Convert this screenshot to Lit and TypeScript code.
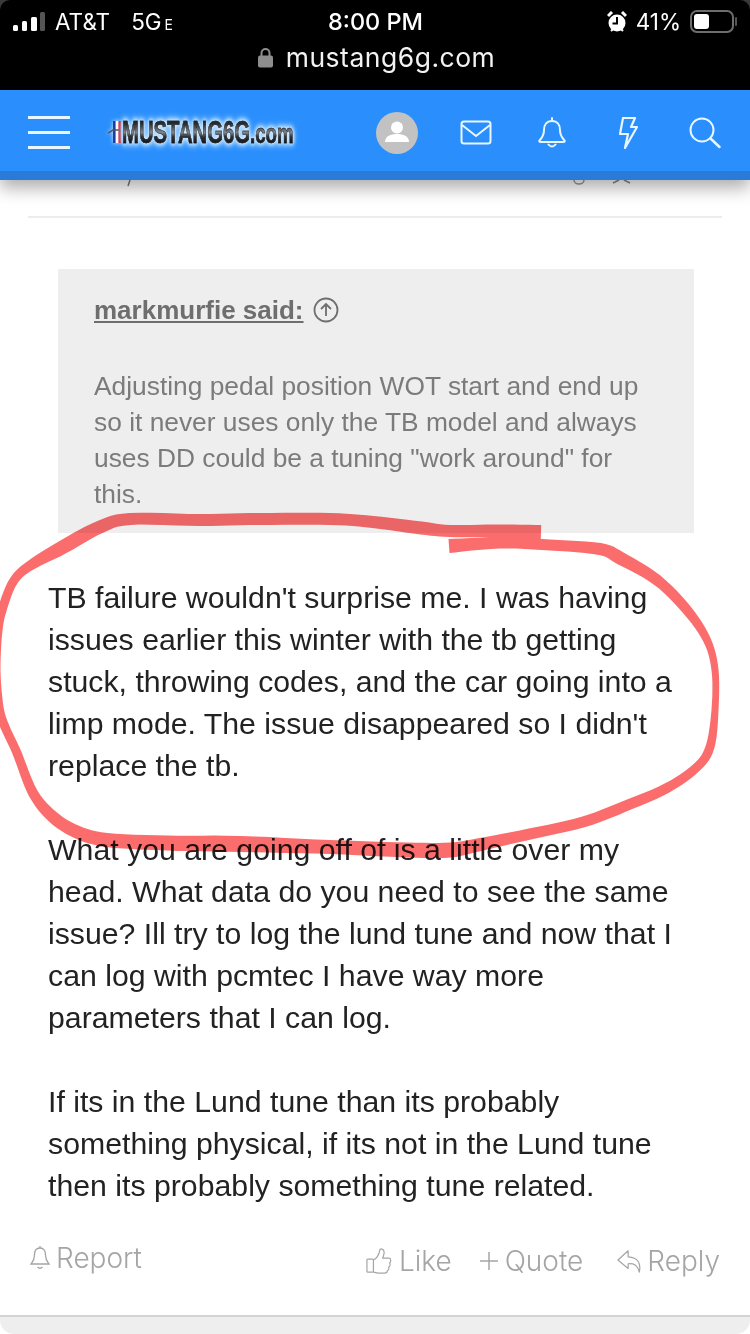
import { LitElement, css, html, svg } from "lit";
import { customElement } from "lit/decorators.js";

// x, y, width along the marker stroke drawn over the screenshot
const strokePoints = [
  [541, 532, 14], [495, 531, 13], [450, 531, 12], [421, 528, 13], [373, 522, 12], [330, 519, 12],
  [260, 519, 12], [200, 520, 12], [130, 519, 12], [100, 527, 13], [63, 547, 14], [28, 567, 10],
  [13, 582, 9], [3, 607, 9], [-2, 630, 9], [-4, 670, 9], [-1, 707, 9], [5, 727, 9], [17, 753, 9],
  [33, 793, 10], [53, 817, 12], [77, 832, 13], [107, 840, 14], [167, 843, 15], [240, 844, 16],
  [330, 847, 14], [407, 850, 15], [450, 850, 15], [478, 845, 13], [530, 834, 11], [583, 822, 11],
  [623, 807, 11], [667, 788, 10], [697, 767, 9], [710, 747, 9], [715, 710, 7], [715, 670, 7],
  [707, 640, 8], [687, 610, 10], [657, 580, 11], [620, 558, 13], [600, 549, 12], [550, 545, 11],
  [500, 543, 11], [449, 546, 14],
];

function ribbon(points: number[][]) {
  const samples: number[][] = [];
  for (let i = 0; i < points.length - 1; i++) {
    const a = points[Math.max(i - 1, 0)];
    const b = points[i];
    const c = points[i + 1];
    const d = points[Math.min(i + 2, points.length - 1)];
    for (let s = 0; s < 6; s++) {
      const t = s / 6;
      const cr = (k: number) =>
        0.5 *
        (2 * b[k] +
          (c[k] - a[k]) * t +
          (2 * a[k] - 5 * b[k] + 4 * c[k] - d[k]) * t * t +
          (3 * b[k] - a[k] - 3 * c[k] + d[k]) * t * t * t);
      samples.push([cr(0), cr(1), cr(2)]);
    }
  }
  samples.push(points[points.length - 1]);
  const left: string[] = [];
  const right: string[] = [];
  samples.forEach((p, i) => {
    const prev = samples[Math.max(i - 1, 0)];
    const next = samples[Math.min(i + 1, samples.length - 1)];
    const dx = next[0] - prev[0];
    const dy = next[1] - prev[1];
    const len = Math.hypot(dx, dy) || 1;
    const nx = (-dy / len) * (p[2] / 2);
    const ny = (dx / len) * (p[2] / 2);
    left.push(`${(p[0] + nx).toFixed(1)},${(p[1] + ny).toFixed(1)}`);
    right.unshift(`${(p[0] - nx).toFixed(1)},${(p[1] - ny).toFixed(1)}`);
  });
  return [...left, ...right].join(" ");
}

const ink = svg`<polygon points=${ribbon(strokePoints)} fill="#fb6c6c" fill-rule="nonzero" />`;

@customElement("app-root")
export class AppRoot extends LitElement {
  public static styles = css`
    :host {
      display: block;
      position: relative;
      width: 750px;
      height: 1334px;
      overflow: hidden;
      background: #fff;
      font-family: "Liberation Sans", Arial, sans-serif;
    }

    .top-wrap {
      background: #3a3a3a;
    }

    .phone-top {
      height: 90px;
      background: #000;
      border-radius: 10px 10px 0 0;
      color: #fff;
      font-family: Inter, "Liberation Sans", sans-serif;
      box-sizing: border-box;
      padding-top: 7px;
    }

    .status {
      height: 26px;
      display: grid;
      grid-template-columns: 1fr auto 1fr;
      align-items: center;
      padding: 0 12px 0 13px;
      font-size: 22.500px;
    }

    .status-left {
      display: flex;
      align-items: center;
      gap: 9px;
    }

    .carrier {
      margin-right: 12px;
    }

    .net small {
      font-size: 14px;
      margin-left: 3px;
    }

    .clock {
      font-weight: 500;
      font-size: 23.500px;
    }

    .status-right {
      display: flex;
      justify-content: flex-end;
      align-items: center;
      gap: 9px;
    }

    .url {
      display: flex;
      justify-content: center;
      align-items: center;
      gap: 13px;
      margin-top: 7px;
      padding-left: 3px;
      font-size: 26.500px;
      line-height: 34px;
      letter-spacing: 0.500px;
      color: #f2f2f2;
    }

    .nav {
      position: relative;
      z-index: 2;
      height: 81px;
      border-bottom: 9px solid #2a7bd8;
      background: #2a8ffc;
      box-shadow: 0 8px 16px rgba(0, 0, 0, 0.32);
      display: flex;
      align-items: center;
      padding: 0 0 0 28px;
    }

    .burger {
      display: flex;
      flex-direction: column;
      gap: 12px;
      width: 42px;
      margin-top: 4px;
    }

    .burger span {
      height: 3px;
      background: #e8f6ff;
    }

    .logo {
      margin-left: 38px;
      width: 187px;
      height: 28px;
      display: flex;
      align-items: center;
      margin-top: 3px;
    }

    .logo svg {
      flex: none;
      filter: drop-shadow(0 0 2px #cfe9ff);
    }

    .logo-text {
      flex: none;
      width: 173px;
      height: 28px;
    }

    .logo-word {
      display: inline-block;
      font-weight: 700;
      font-size: 30.500px;
      line-height: 28px;
      white-space: nowrap;
      color: #23262a;
      transform: scaleX(0.665);
      transform-origin: left center;
      background: linear-gradient(#26292d 18%, #7f868e 48%, #30343a 62%, #121315 85%);
      -webkit-background-clip: text;
      background-clip: text;
      -webkit-text-fill-color: transparent;
      -webkit-text-stroke: 0.500px #1b1d20;
      filter: drop-shadow(0 0 2px #dff1ff) drop-shadow(0 0 3px #b4dcff) drop-shadow(0 0 2px #9fd0fb);
    }

    .logo-word small {
      font-size: 28px;
    }

    .nav-icons {
      margin-left: 80px;
      margin-top: 5px;
      display: flex;
      align-items: center;
    }

    .nav-icons svg {
      display: block;
    }

    .ic-mail {
      margin-left: 41px;
    }

    .ic-bell {
      margin-left: 46px;
    }

    .ic-bolt {
      margin-left: 52px;
    }

    .ic-search {
      margin-left: 51px;
    }

    .post {
      padding: 0 28px;
    }

    .cut {
      height: 36px;
      border-bottom: 2px solid #ececec;
      position: relative;
    }

    .cut svg {
      position: absolute;
      left: -28px;
      top: 0;
    }

    .quote {
      margin: 51px 28px 0 30px;
      height: 264px;
      box-sizing: border-box;
      padding: 23px 36px 0;
      background: #eeeeee;
      color: #7b7b7b;
      font-size: 26.350px;
      line-height: 36px;
    }

    .quote-head {
      display: flex;
      align-items: center;
      gap: 9px;
      font-weight: 700;
      font-size: 26px;
      color: #6e6e6e;
      margin-bottom: 40px;
    }

    .quote-head span {
      text-decoration: underline;
    }

    .body {
      margin: 44px 0 0 20px;
      color: #222;
      font-size: 30.250px;
      line-height: 42px;
    }

    .body p {
      margin: 0 0 42px;
      white-space: nowrap;
    }

    .actions {
      margin-top: -5px;
      display: flex;
      align-items: center;
      color: #a5a5a5;
      font-family: Inter, "Open Sans", sans-serif;
      font-weight: 300;
      font-size: 28px;
    }

    .action {
      display: flex;
      align-items: center;
      gap: 7px;
    }

    .report {
      margin-right: auto;
      margin-top: -6px;
      margin-left: 2px;
      gap: 6px;
    }

    .like {
      margin-right: 28px;
    }

    .quote-btn {
      margin-right: 34px;
    }

    .reply {
      margin-right: 2px;
      gap: 4px;
    }

    .foot-wrap {
      position: absolute;
      left: 0;
      right: 0;
      bottom: 0;
    }

    .foot {
      height: 19px;
      box-sizing: border-box;
      border-top: 2px solid #d4d4d4;
      background: #eeeeee;
      border-radius: 0 0 14px 14px;
    }

    .ink {
      position: absolute;
      left: 0;
      top: 0;
      z-index: 1;
      pointer-events: none;
      mix-blend-mode: multiply;
      filter: blur(0.6px);
    }
  `;

  public render() {
    return html`
      <div class="top-wrap">
        <div class="phone-top">
          <div class="status">
            <div class="status-left">
              <svg width="33" height="20" viewBox="0 0 33 20">
                <rect x="0" y="13" width="5" height="6" rx="1.500" fill="#fff" />
                <rect x="9" y="9" width="5" height="10" rx="1.500" fill="#fff" />
                <rect x="18" y="5" width="6" height="14" rx="1.500" fill="#fff" />
                <rect x="27" y="0" width="5" height="19" rx="1.500" fill="#555" />
              </svg>
              <span class="carrier">AT&amp;T</span>
              <span class="net">5G<small>E</small></span>
            </div>
            <div class="clock">8:00 PM</div>
            <div class="status-right">
              <svg width="20" height="22" viewBox="0 0 20 22">
                <circle cx="10" cy="12" r="8.500" fill="#fff" />
                <path d="M10 6v6.500H5.500" fill="none" stroke="#000" stroke-width="2" />
                <path d="M1 5l4-4M19 5l-4-4" stroke="#fff" stroke-width="3" />
                <path d="M4 20l2-2M16 20l-2-2" stroke="#fff" stroke-width="2" />
              </svg>
              <span>41%</span>
              <svg width="48" height="24" viewBox="0 0 48 24">
                <rect x="1" y="1" width="42" height="21" rx="6" fill="none" stroke="#6d6d6d" stroke-width="2" />
                <rect x="4" y="4" width="15" height="15" rx="3" fill="#fff" />
                <path d="M46 8v7" stroke="#555" stroke-width="2" stroke-linecap="round" />
              </svg>
            </div>
          </div>
          <div class="url">
            <svg width="15" height="21" viewBox="0 0 15 21">
              <path d="M3.500 9V6a4 4 0 0 1 8 0v3" fill="none" stroke="#8e8e8e" stroke-width="2" />
              <rect x="0" y="8.500" width="15" height="12" rx="2" fill="#8e8e8e" />
            </svg>
            <span>mustang6g.com</span>
          </div>
        </div>
      </div>

      <div class="nav">
        <div class="burger"><span></span><span></span><span></span></div>
        <div class="logo">
          <svg width="14" height="26" viewBox="0 0 14 26">
            <rect x="5" y="2" width="8" height="22" rx="1" fill="#fff" />
            <rect x="5" y="2" width="2.600" height="22" fill="#1f3f9e" />
            <rect x="10.400" y="2" width="2.600" height="22" fill="#c8283a" />
            <path d="M0 14l5-3h8" fill="none" stroke="#555" stroke-width="1.500" />
          </svg>
          <div class="logo-text"><span class="logo-word">MUSTANG6G<small>.com</small></span></div>
        </div>
        <div class="nav-icons">
          <svg width="44" height="44" viewBox="0 0 44 44">
            <circle cx="22" cy="22" r="21" fill="#c2c2c2" />
            <circle cx="22" cy="16.500" r="6" fill="#fff" />
            <path d="M10 31c0-6 6-8 12-8s12 2 12 8z" fill="#fff" />
          </svg>
          <svg class="ic-mail" width="32" height="26" viewBox="0 0 32 26">
            <rect x="1.500" y="1.500" width="29" height="22" rx="2.500" fill="none" stroke="#e8f6ff" stroke-width="2" />
            <path d="M2 5l14 11L30 5" fill="none" stroke="#e8f6ff" stroke-width="2" />
          </svg>
          <svg class="ic-bell" width="28" height="32" viewBox="0 0 28 32">
            <path d="M14 1v3M14 4c-5.500 0-8 4-8 9 0 6-2.500 8-4.500 10.500-.5 1 0 1.500 1 1.500h23c1 0 1.500-.5 1-1.500C24.500 21 22 19 22 13c0-5-2.500-9-8-9zM10.500 27.500c2 2.500 5 2.500 7 0" fill="none" stroke="#e8f6ff" stroke-width="2" stroke-linecap="round" stroke-linejoin="round" />
          </svg>
          <svg class="ic-bolt" width="20" height="32" viewBox="0 0 20 32">
            <path d="M5 1h12l-4 9h6L7 31l3-14H2z" fill="none" stroke="#e8f6ff" stroke-width="2.200" stroke-linejoin="round" />
          </svg>
          <svg class="ic-search" width="32" height="32" viewBox="0 0 32 32">
            <circle cx="13" cy="13" r="11.500" fill="none" stroke="#e8f6ff" stroke-width="2" />
            <path d="M21.500 21.500L30.500 30" stroke="#e8f6ff" stroke-width="2.500" stroke-linecap="round" />
          </svg>
        </div>
      </div>

      <div class="post">
        <div class="cut">
          <svg width="750" height="10" viewBox="0 0 750 10">
            <path d="M130 0l-2 6" stroke="#777" stroke-width="1.500" fill="none" />
            <path d="M574 0a5 4 0 0 0 10 0" stroke="#999" stroke-width="1.500" fill="none" />
            <path d="M613 3l6-3M630 3l-6-3" stroke="#888" stroke-width="1.500" fill="none" />
          </svg>
        </div>
        <div class="quote">
          <div class="quote-head">
            <span>markmurfie said:</span>
            <svg width="26" height="26" viewBox="0 0 26 26">
              <circle cx="13" cy="13" r="11.500" fill="none" stroke="#6e6e6e" stroke-width="1.800" />
              <path d="M13 19V7M8 12l5-5 5 5" fill="none" stroke="#6e6e6e" stroke-width="1.800" />
            </svg>
          </div>
          Adjusting pedal position WOT start and end up<br />
          so it never uses only the TB model and always<br />
          uses DD could be a tuning "work around" for<br />
          this.
        </div>
        <div class="body">
          <p>
            TB failure wouldn't surprise me. I was having<br />
            issues earlier this winter with the tb getting<br />
            stuck, throwing codes, and the car going into a<br />
            limp mode. The issue disappeared so I didn't<br />
            replace the tb.
          </p>
          <p>
            What you are going off of is a little over my<br />
            head. What data do you need to see the same<br />
            issue? Ill try to log the lund tune and now that I<br />
            can log with pcmtec I have way more<br />
            parameters that I can log.
          </p>
          <p>
            If its in the Lund tune than its probably<br />
            something physical, if its not in the Lund tune<br />
            then its probably something tune related.
          </p>
        </div>
        <div class="actions">
          <div class="action report">
            <svg width="20" height="26" viewBox="0 0 20 26">
              <path d="M10 1v2M10 3C6 3 4.500 6 4.500 10c0 5-2 7-3.500 9h18c-1.500-2-3.500-4-3.500-9 0-4-1.500-7-5.500-7zM7.500 22c1.500 1.500 3.500 1.500 5 0" fill="none" stroke="#a5a5a5" stroke-width="1.300" />
            </svg>
            <span>Report</span>
          </div>
          <div class="action like">
            <svg width="26" height="28" viewBox="0 0 28 28">
              <rect x="1" y="12" width="7" height="14" rx="1" fill="none" stroke="#a5a5a5" stroke-width="1.300" />
              <path d="M8 13c4-2 6-6 7-11 0-1.500 4-1.500 4.500 2 .3 2.500-1 5-1.500 7h7c2 0 2 4 .5 5 1 2 0 4-1 4.500.5 2-.5 3.500-1.500 4 0 2-1 2.500-3 2.500H13c-2 0-3-1-5-1" fill="none" stroke="#a5a5a5" stroke-width="1.300" />
            </svg>
            <span>Like</span>
          </div>
          <div class="action quote-btn">
            <svg width="18" height="18" viewBox="0 0 18 18">
              <path d="M0 9h18M9 0v18" stroke="#a5a5a5" stroke-width="1.500" />
            </svg>
            <span>Quote</span>
          </div>
          <div class="action reply">
            <svg width="26" height="26" viewBox="0 0 28 26">
              <path d="M12 2L1 12l11 9v-5c6-.5 10 1 12 9 2-9-1-16-12-16.500z" fill="none" stroke="#a5a5a5" stroke-width="1.300" stroke-linejoin="round" />
            </svg>
            <span>Reply</span>
          </div>
        </div>
      </div>
      <div class="foot-wrap"><div class="foot"></div></div>
      <svg class="ink" width="750" height="1334" viewBox="0 0 750 1334">${ink}</svg>
    `;
  }
}
